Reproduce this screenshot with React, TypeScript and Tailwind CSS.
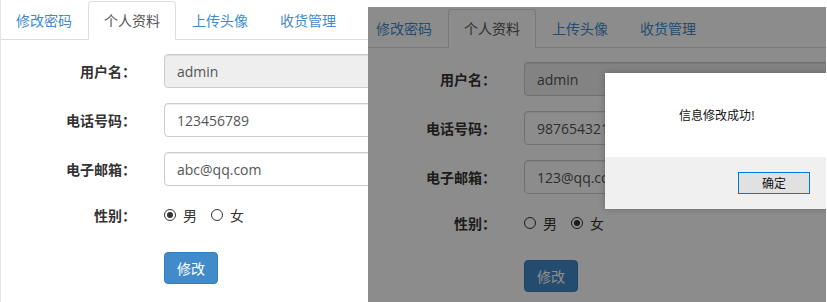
import React from "react";

const FONT = "font-['Open_Sans','Noto_Sans_CJK_SC',sans-serif]";

function Radio({ checked, label }: { checked: boolean; label: string }) {
  return (
    <div className="flex items-center">
      <span className="w-[12px] h-[12px] rounded-full border border-[#333] flex items-center justify-center bg-white">
        {checked && <span className="w-[6px] h-[6px] rounded-full bg-[#333]" />}
      </span>
      <span className="ml-[7px] text-[14px] text-[#333]">{label}</span>
    </div>
  );
}

function Row({ label, children }: { label: string; children: React.ReactNode }) {
  return (
    <div className="flex items-center h-[34px]">
      <div className="w-[136px] shrink-0 text-right font-bold text-[14px] text-[#333]">{label}</div>
      <div className="ml-[28px]">{children}</div>
    </div>
  );
}

function Input({ value, disabled }: { value: string; disabled?: boolean }) {
  return (
    <div
      className={`w-[400px] h-[34px] flex items-center pl-[12px] rounded-[4px] border border-[#ccc] shadow-[inset_0_1px_1px_rgba(0,0,0,0.075)] text-[14px] text-[#555] ${
        disabled ? "bg-[#eee]" : "bg-white"
      }`}
    >
      {value}
    </div>
  );
}

function Form({ phone, email, male }: { phone: string; email: string; male: boolean }) {
  const tabs = ["修改密码", "个人资料", "上传头像", "收货管理"];
  return (
    <div className={`w-[470px] pt-[1px] bg-white ${FONT}`}>
      <div className="flex h-[39px] border-b border-[#ddd]">
        {tabs.map((t, i) => (
          <div
            key={t}
            className={`h-[39px] -mb-px px-[15px] flex items-center text-[14px] rounded-t-[4px] border ${
              i === 1
                ? "border-[#ddd] border-b-white bg-white text-[#555]"
                : "border-transparent text-[#428bca]"
            }`}
          >
            {t}
          </div>
        ))}
      </div>
      <div className="flex flex-col mt-[14px]">
        <Row label="用户名：">
          <Input value="admin" disabled />
        </Row>
        <div className="mt-[15px]">
          <Row label="电话号码：">
            <Input value={phone} />
          </Row>
        </div>
        <div className="mt-[15px]">
          <Row label="电子邮箱：">
            <Input value={email} />
          </Row>
        </div>
        <div className="flex items-center h-[28px] mt-[15px]">
          <div className="w-[136px] shrink-0 text-right font-bold text-[14px] text-[#333]">性别：</div>
          <div className="ml-[28px] flex items-center gap-[14px]">
            <Radio checked={male} label="男" />
            <Radio checked={!male} label="女" />
          </div>
        </div>
        <div className="flex mt-[23px] pl-[164px]">
          <div className="h-[32px] px-[12px] flex items-center rounded-[4px] bg-[#428bca] border border-[#357ebd] text-white text-[14px]">
            修改
          </div>
        </div>
      </div>
    </div>
  );
}

export default function App() {
  return (
    <div className="w-[827px] h-[302px] bg-white flex overflow-hidden">
      <div className="w-[368px] h-[302px] shrink-0 overflow-hidden border-l border-[#e5e5e5]">
        <div className="-ml-px">
          <Form phone="123456789" email="abc@qq.com" male={true} />
        </div>
      </div>
      <div className="relative w-[458px] h-[295px] mt-[7px] shrink-0 overflow-hidden">
        <div className="-ml-[8px] mt-[1px]">
          <Form phone="987654321" email="123@qq.com" male={false} />
        </div>
        <div className="absolute inset-0 bg-black/45" />
        <div className="absolute left-[237px] top-[66px] w-[224px] h-[136px] flex flex-col bg-white shadow-[0_0_6px_rgba(0,0,0,0.25)] font-['Noto_Sans_CJK_SC',sans-serif]">
          <div className="h-[84px] flex items-center justify-center text-[12px] text-[#111]">信息修改成功!</div>
          <div className="flex-1 bg-[#f0f0f0] flex items-center justify-end pr-[19px]">
            <div className="w-[72px] h-[22px] flex items-center justify-center bg-[#e1e1e1] border border-[#0078d7] text-[12px] text-[#111]">
              确定
            </div>
          </div>
        </div>
      </div>
    </div>
  );
}
